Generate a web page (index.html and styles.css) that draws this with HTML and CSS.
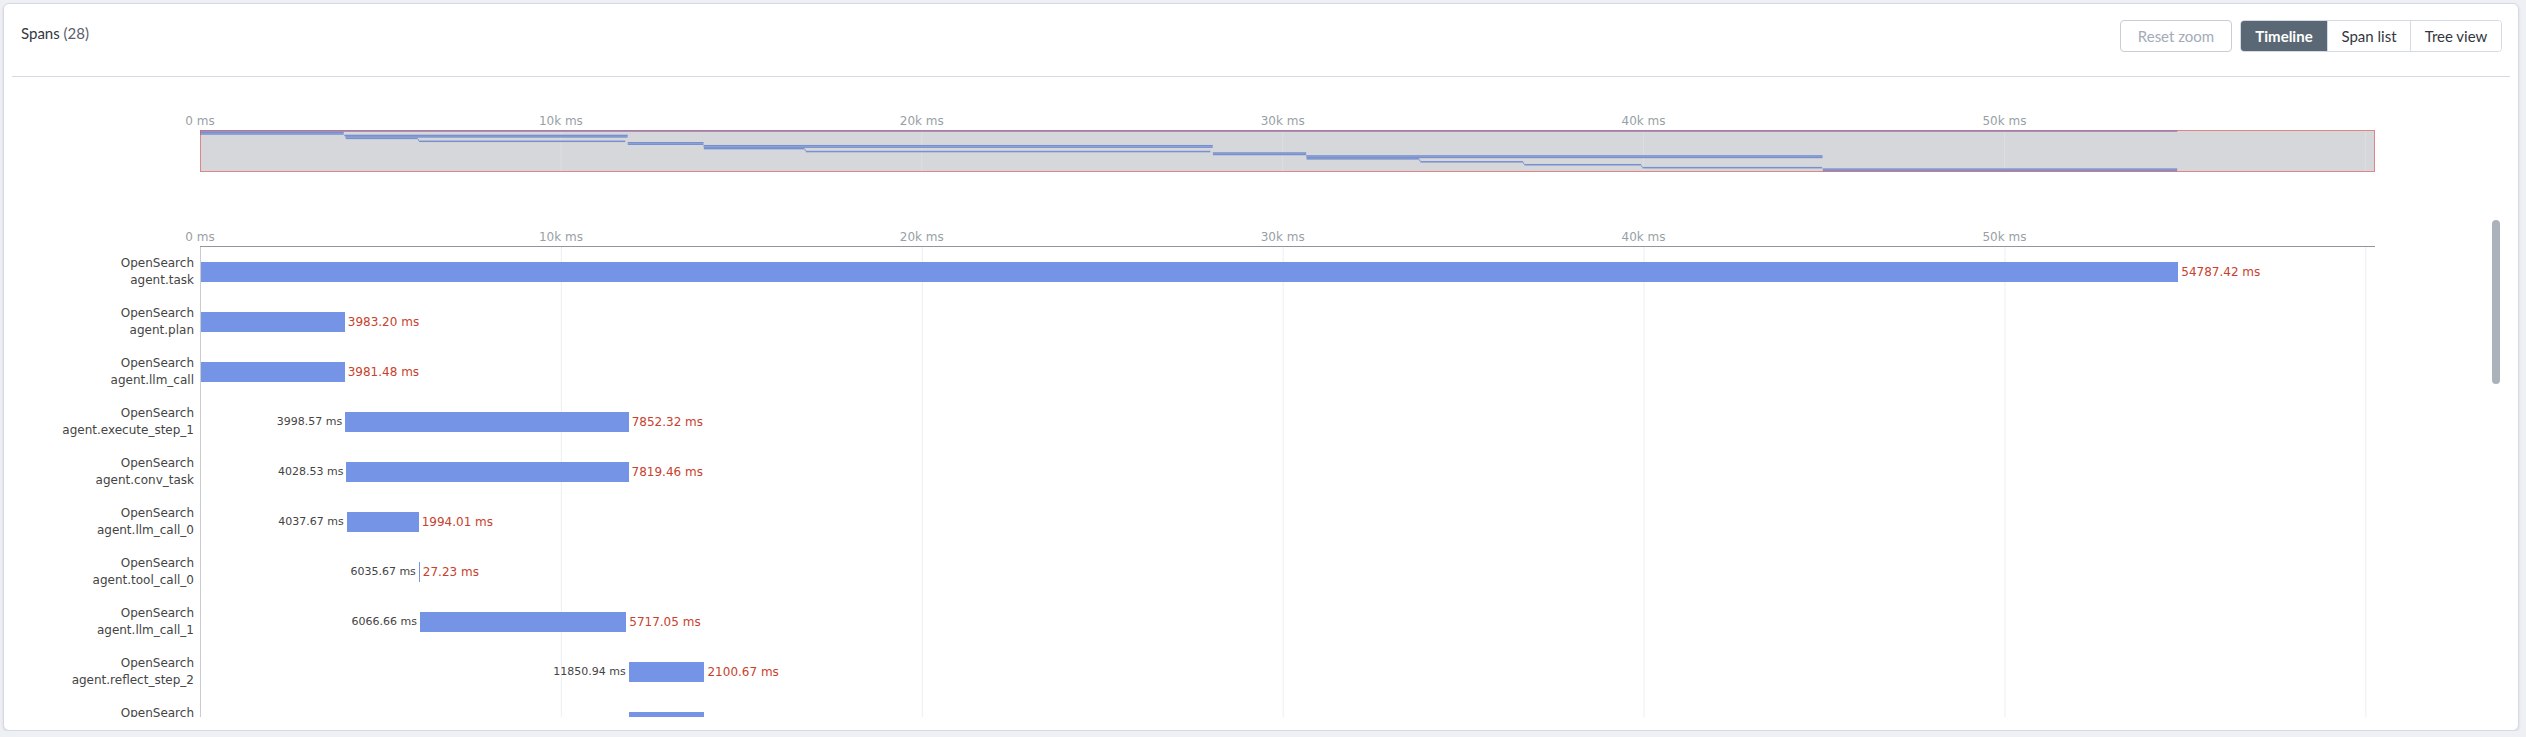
FILE: index.html
```html
<!DOCTYPE html>
<html lang="en">
<head>
<meta charset="utf-8">
<title>Spans</title>
<link rel="stylesheet" href="styles.css">
</head>
<body>
<div class="panel">
  <div class="header">
    <h2 class="title">Spans <span class="count">(28)</span></h2>
    <div class="actions">
      <button class="btn-reset" disabled>Reset zoom</button>
      <div class="btn-group">
        <button class="seg seg-timeline active">Timeline</button>
        <button class="seg seg-list">Span list</button>
        <button class="seg seg-tree">Tree view</button>
      </div>
    </div>
  </div>
  <hr class="divider">

  <div class="minimap">
    <div class="axis-labels">
      <span class="tick">0 ms</span><span class="tick">10k ms</span><span class="tick">20k ms</span><span class="tick">30k ms</span><span class="tick">40k ms</span><span class="tick">50k ms</span>
    </div>
    <svg class="mini-box" width="2175" height="42" viewBox="0 0 2175 42">
      <rect x="0" y="0" width="2175" height="42" fill="#d6d7da"/>
      <g stroke="#dddee1" stroke-width="1">
        <line x1="360.9" y1="0" x2="360.9" y2="42"/>
        <line x1="721.8" y1="0" x2="721.8" y2="42"/>
        <line x1="1082.7" y1="0" x2="1082.7" y2="42"/>
        <line x1="1443.6" y1="0" x2="1443.6" y2="42"/>
        <line x1="1804.5" y1="0" x2="1804.5" y2="42"/>
        <line x1="2165.4" y1="0" x2="2165.4" y2="42"/>
      </g>
      <g fill="#7790cf">
        <rect x="0" y="0.3" width="1977.28" height="1.5"/>
        <rect x="0" y="1.76" width="143.75" height="1.5"/>
        <rect x="0" y="3.23" width="143.69" height="1.5"/>
        <rect x="144.31" y="4.69" width="283.39" height="1.5"/>
        <rect x="145.39" y="6.16" width="282.20" height="1.5"/>
        <rect x="145.72" y="7.62" width="71.96" height="1.5"/>
        <rect x="217.83" y="9.09" width="1" height="1.5"/>
        <rect x="218.95" y="10.55" width="206.33" height="1.5"/>
        <rect x="427.70" y="12.01" width="75.81" height="1.5"/>
        <rect x="427.78" y="13.48" width="75.71" height="1.5"/>
        <rect x="503.59" y="14.94" width="509.18" height="1.5"/>
        <rect x="503.71" y="16.41" width="508.92" height="1.5"/>
        <rect x="503.90" y="17.87" width="100.62" height="1.5"/>
        <rect x="604.61" y="19.34" width="1.13" height="1.5"/>
        <rect x="605.85" y="20.80" width="404.41" height="1.5"/>
        <rect x="1012.85" y="22.26" width="93.34" height="1.5"/>
        <rect x="1012.93" y="23.73" width="93.20" height="1.5"/>
        <rect x="1106.28" y="25.19" width="516.33" height="1.5"/>
        <rect x="1106.44" y="26.66" width="516.02" height="1.5"/>
        <rect x="1106.56" y="28.12" width="112.62" height="1.5"/>
        <rect x="1219.27" y="29.59" width="1" height="1.5"/>
        <rect x="1220.33" y="31.05" width="102.76" height="1.5"/>
        <rect x="1323.17" y="32.51" width="1.07" height="1.5"/>
        <rect x="1324.34" y="33.98" width="116.79" height="1.5"/>
        <rect x="1441.21" y="35.44" width="1" height="1.5"/>
        <rect x="1442.31" y="36.91" width="179.80" height="1.5"/>
        <rect x="1622.69" y="38.37" width="354.48" height="1.5"/>
        <rect x="1622.78" y="39.84" width="354.35" height="1.5"/>
      </g>
      <rect x="0.5" y="0.5" width="2174" height="41" fill="none" stroke="rgba(232,80,80,0.62)" stroke-width="1"/>
    </svg>
  </div>

  <div class="chart-scroll">
    <div class="chart-viewport">
      <div class="axis-row">
        <div class="axis-spacer"></div>
        <div class="axis-track">
          <div class="axis-labels axis-labels-main">
            <span class="tick">0 ms</span><span class="tick">10k ms</span><span class="tick">20k ms</span><span class="tick">30k ms</span><span class="tick">40k ms</span><span class="tick">50k ms</span>
          </div>
        </div>
      </div>
      <div class="rows">
        <div class="row"><div class="row-label"><span>OpenSearch</span><span>agent.task</span></div><div class="track"><div class="bar" style="margin-left:0px;width:1977.28px"><span class="dur-label">54787.42 ms</span></div></div></div>
        <div class="row"><div class="row-label"><span>OpenSearch</span><span>agent.plan</span></div><div class="track"><div class="bar" style="margin-left:0px;width:143.75px"><span class="dur-label">3983.20 ms</span></div></div></div>
        <div class="row"><div class="row-label"><span>OpenSearch</span><span>agent.llm_call</span></div><div class="track"><div class="bar" style="margin-left:0px;width:143.69px"><span class="dur-label">3981.48 ms</span></div></div></div>
        <div class="row"><div class="row-label"><span>OpenSearch</span><span>agent.execute_step_1</span></div><div class="track"><div class="bar" style="margin-left:144.31px;width:283.39px"><span class="start-label">3998.57 ms</span><span class="dur-label">7852.32 ms</span></div></div></div>
        <div class="row"><div class="row-label"><span>OpenSearch</span><span>agent.conv_task</span></div><div class="track"><div class="bar" style="margin-left:145.39px;width:282.20px"><span class="start-label">4028.53 ms</span><span class="dur-label">7819.46 ms</span></div></div></div>
        <div class="row"><div class="row-label"><span>OpenSearch</span><span>agent.llm_call_0</span></div><div class="track"><div class="bar" style="margin-left:145.72px;width:71.96px"><span class="start-label">4037.67 ms</span><span class="dur-label">1994.01 ms</span></div></div></div>
        <div class="row"><div class="row-label"><span>OpenSearch</span><span>agent.tool_call_0</span></div><div class="track"><div class="bar" style="margin-left:217.83px;width:1px"><span class="start-label">6035.67 ms</span><span class="dur-label">27.23 ms</span></div></div></div>
        <div class="row"><div class="row-label"><span>OpenSearch</span><span>agent.llm_call_1</span></div><div class="track"><div class="bar" style="margin-left:218.95px;width:206.33px"><span class="start-label">6066.66 ms</span><span class="dur-label">5717.05 ms</span></div></div></div>
        <div class="row"><div class="row-label"><span>OpenSearch</span><span>agent.reflect_step_2</span></div><div class="track"><div class="bar" style="margin-left:427.70px;width:75.81px"><span class="start-label">11850.94 ms</span><span class="dur-label">2100.67 ms</span></div></div></div>
        <div class="row"><div class="row-label"><span>OpenSearch</span></div><div class="track"><div class="bar" style="margin-left:427.78px;width:75.71px"></div></div></div>
      </div>
    </div>
    <div class="scrollbar"><div class="scroll-thumb"></div></div>
  </div>
</div>
</body>
</html>
```

FILE: styles.css
```css
html, body {
  margin: 0;
  padding: 0;
}

body {
  background: #eef0f3;
  font-family: Lato, "Liberation Sans", sans-serif;
  color: #343741;
}

.panel {
  box-sizing: border-box;
  margin: 3px 7px 0 3px;
  height: 728px;
  background: #ffffff;
  border: 1px solid #d3dae6;
  border-radius: 6px;
  box-shadow: 0 1px 2px rgba(0, 0, 0, 0.08), 0 2px 5px rgba(0, 0, 0, 0.04);
  padding: 8px;
  display: flex;
  flex-direction: column;
}

/* ---------- header ---------- */
.header {
  display: flex;
  justify-content: space-between;
  align-items: flex-start;
  padding: 8px 8px 0 9px;
}

.title {
  margin: 2px 0 0;
  font-size: 15px;
  line-height: 22px;
  font-weight: 400;
  color: #343741;
}

.count {
  color: #5a606b;
}

.actions {
  display: flex;
  gap: 8px;
}

.btn-reset {
  box-sizing: border-box;
  width: 112px;
  height: 32px;
  padding: 0;
  border: 1px solid #c9ced6;
  border-radius: 4px;
  background: #ffffff;
  font-family: Lato, "Liberation Sans", sans-serif;
  font-size: 15px;
  color: #a3abb8;
}

.btn-group {
  display: flex;
  border: 1px solid #d3dae6;
  border-radius: 4px;
  overflow: hidden;
}

.seg {
  box-sizing: border-box;
  height: 30px;
  padding: 0;
  border: 0;
  border-left: 1px solid #d3dae6;
  background: #ffffff;
  font-family: Lato, "Liberation Sans", sans-serif;
  font-size: 15px;
  color: #343741;
}

.seg-timeline {
  width: 86px;
  border-left: 0;
}

.seg-list {
  width: 83px;
}

.seg-tree {
  width: 91px;
}

.seg.active {
  background: #5a6875;
  color: #ffffff;
  font-weight: 700;
}

.divider {
  border: 0;
  border-top: 1px solid #d3dae6;
  height: 0;
  margin: 24px 0 0;
}

/* ---------- axis labels (shared) ---------- */
.axis-labels {
  display: flex;
  font-family: "DejaVu Sans", Verdana, sans-serif;
  font-size: 12px;
  line-height: 14px;
  color: #989fa5;
  white-space: nowrap;
}

.tick {
  flex: none;
  width: 360.9px;
  text-align: center;
}

/* ---------- minimap ---------- */
.minimap {
  margin-top: 37px;
}

.minimap .axis-labels {
  margin-left: 7.55px;
}

.mini-box {
  display: block;
  margin: 2px 0 0 188px;
}

/* ---------- main chart ---------- */
.chart-scroll {
  display: flex;
  margin: 46px 8px 0 0;
  height: 499px;
}

.chart-viewport {
  flex: 1;
  min-width: 0;
  overflow: hidden;
}

.scrollbar {
  flex: none;
  width: 12px;
}

.scroll-thumb {
  width: 8px;
  height: 164px;
  margin: 2px;
  border-radius: 4px;
  background: #abb2b9;
}

.axis-row {
  display: flex;
  padding-top: 12px;
}

.axis-spacer {
  flex: none;
  width: 188px;
}

.axis-track {
  flex: none;
  width: 2175px;
  height: 14px;
  padding-bottom: 2px;
  border-bottom: 1px solid #8f979c;
}

.axis-labels-main {
  margin-left: -180.45px;
}

.row {
  display: flex;
  height: 50px;
}

.row-label {
  flex: none;
  width: 182px;
  margin-right: 6px;
  padding-top: 8px;
  text-align: right;
  font-family: "DejaVu Sans", Verdana, sans-serif;
  font-size: 12px;
  line-height: 17px;
  color: #444444;
  white-space: nowrap;
}

.row-label span {
  display: block;
}

.track {
  flex: none;
  box-sizing: border-box;
  width: 2175px;
  border-left: 1px solid #c9cdd1;
  background-image: linear-gradient(to right, #eceef1 1px, transparent 1px);
  background-size: 360.9px 100%;
  background-position: -1px 0;
}

.bar {
  position: relative;
  height: 20px;
  margin-top: 15px;
  background: #7694e6;
}

.start-label,
.dur-label {
  position: absolute;
  top: 0;
  line-height: 20px;
  white-space: nowrap;
  font-family: "DejaVu Sans", Verdana, sans-serif;
}

.start-label {
  right: 100%;
  margin-right: 3px;
  font-size: 11px;
  color: #444444;
}

.dur-label {
  left: 100%;
  margin-left: 3px;
  font-size: 12px;
  color: #c8412d;
}
```
